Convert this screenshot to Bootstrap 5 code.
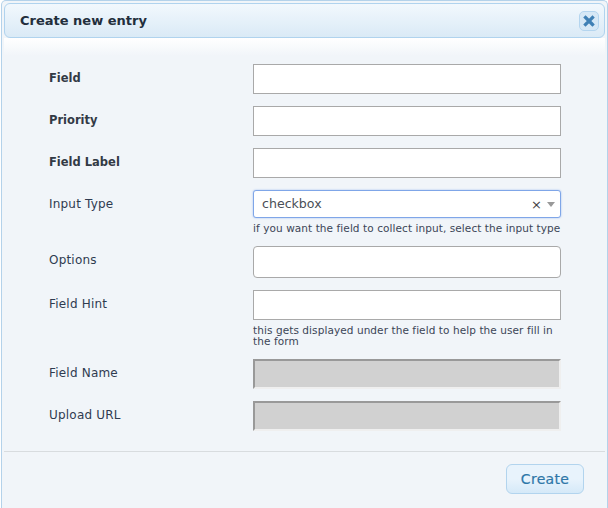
<!DOCTYPE html>
<html lang="en">
<head>
<meta charset="utf-8">
<title>Create new entry</title>
<link rel="stylesheet" href="https://cdn.jsdelivr.net/npm/bootstrap@5.3.0/dist/css/bootstrap.min.css">
<style>
html,body{height:508px;overflow:hidden;background:#fff;}
body{font-family:"DejaVu Sans",sans-serif;font-size:12px;color:#2e3a4a;}
.dlg{height:508px;margin:0 0 0 1px;padding:2px 2px 0 2px;background:#f1f5f9;border:1px solid #b4d2ea;border-bottom:0;border-radius:5px 5px 0 0;}
.dlg-head{height:35px;background:linear-gradient(#f2f8fd,#daeaf6);border:1px solid #b0d3ee;border-radius:6px;padding:0 5px 0 15px;color:#222e3c;}
.dlg-title{font-size:13px;font-weight:700;padding-top:1px;}
.dlg-close{width:20px;height:20px;padding:0;border:1px solid #b4d5ef;border-radius:5px;background:#d6e8f6;}
.dlg-close svg{display:block;margin:auto;}
.dlg-body{padding:26px 44px 0 45px;background:linear-gradient(#fff,#f1f5f9 18px);height:414px;border-bottom:1px solid #d8dcdf;}
.frow{margin-bottom:12px;}
.flabel{width:204px;flex:none;padding-top:7px;line-height:15px;letter-spacing:.2px;color:#2f3b50;}
.flabel.req{font-size:11.5px;font-weight:700;letter-spacing:0;color:#333a45;}
.fctl{width:308px;flex:none;}
.finput{display:block;width:100%;height:30px;border:1px solid #a9a9a9;background:#fff;padding:0 8px;}
.finput.tall{height:32px;border-radius:4px;}
.finput.off{background:#d1d1d1;border:2px solid;border-color:#999 #efefef #efefef #999;}
.fsel{height:28px;margin-bottom:4px;border:1px solid #7fa6e8;border-radius:3px;background:#fff;padding:1px 5px 0 8px;font-size:12.6px;box-shadow:0 0 2px #9dbcf0;color:#4a4f57;}
.fsel-x{font-size:13px;line-height:1;margin-right:5px;color:#444;}
.fsel-arrow{width:0;height:0;border-left:4.5px solid transparent;border-right:4.5px solid transparent;border-top:5px solid #999;}
.fhint{font-size:10.5px;line-height:11px;padding-right:1px;letter-spacing:.08px;color:#3c4657;margin-top:5px;}
.fhint.one{margin:0;line-height:12px;white-space:nowrap;}
.dlg-foot{padding:12px 21px 0 0;}
.btn-create{width:78px;height:30px;padding:0;font-size:14px;font-weight:400;letter-spacing:.3px;color:#2e77a8;border:1px solid #b2d4ee;border-radius:6px;background:linear-gradient(#e8f3fc 50%,#d5e9f8);-webkit-text-stroke:.2px #2e77a8;}
</style>
</head>
<body>
<div class="dlg">
  <div class="dlg-head d-flex align-items-center justify-content-between">
    <span class="dlg-title">Create new entry</span>
    <button type="button" class="dlg-close d-flex align-items-center" aria-label="Close">
      <svg width="12" height="12" viewBox="0 0 12 12"><path d="M2.5 2.5L9.5 9.5M9.5 2.5L2.5 9.5" stroke="#3f80b5" stroke-width="3.2" stroke-linecap="square" fill="none"/></svg>
    </button>
  </div>
  <form class="dlg-body">
    <div class="d-flex frow"><label class="flabel req">Field</label><div class="fctl"><input class="finput"></div></div>
    <div class="d-flex frow"><label class="flabel req">Priority</label><div class="fctl"><input class="finput"></div></div>
    <div class="d-flex frow"><label class="flabel req">Field Label</label><div class="fctl"><input class="finput"></div></div>
    <div class="d-flex frow"><label class="flabel">Input Type</label>
      <div class="fctl">
        <div class="fsel d-flex align-items-center"><span class="flex-grow-1">checkbox</span><span class="fsel-x">×</span><span class="fsel-arrow"></span></div>
        <div class="fhint one">if you want the field to collect input, select the input type</div>
      </div>
    </div>
    <div class="d-flex frow"><label class="flabel">Options</label><div class="fctl"><input class="finput tall"></div></div>
    <div class="d-flex frow"><label class="flabel">Field Hint</label>
      <div class="fctl">
        <input class="finput">
        <div class="fhint">this gets displayed under the field to help the user fill in the form</div>
      </div>
    </div>
    <div class="d-flex frow"><label class="flabel">Field Name</label><div class="fctl"><input class="finput off" disabled></div></div>
    <div class="d-flex frow"><label class="flabel">Upload URL</label><div class="fctl"><input class="finput off" disabled></div></div>
  </form>
  <div class="dlg-foot d-flex justify-content-end"><button type="button" class="btn-create">Create</button></div>
</div>
<script src="https://cdn.jsdelivr.net/npm/bootstrap@5.3.0/dist/js/bootstrap.bundle.min.js"></script>
</body>
</html>
